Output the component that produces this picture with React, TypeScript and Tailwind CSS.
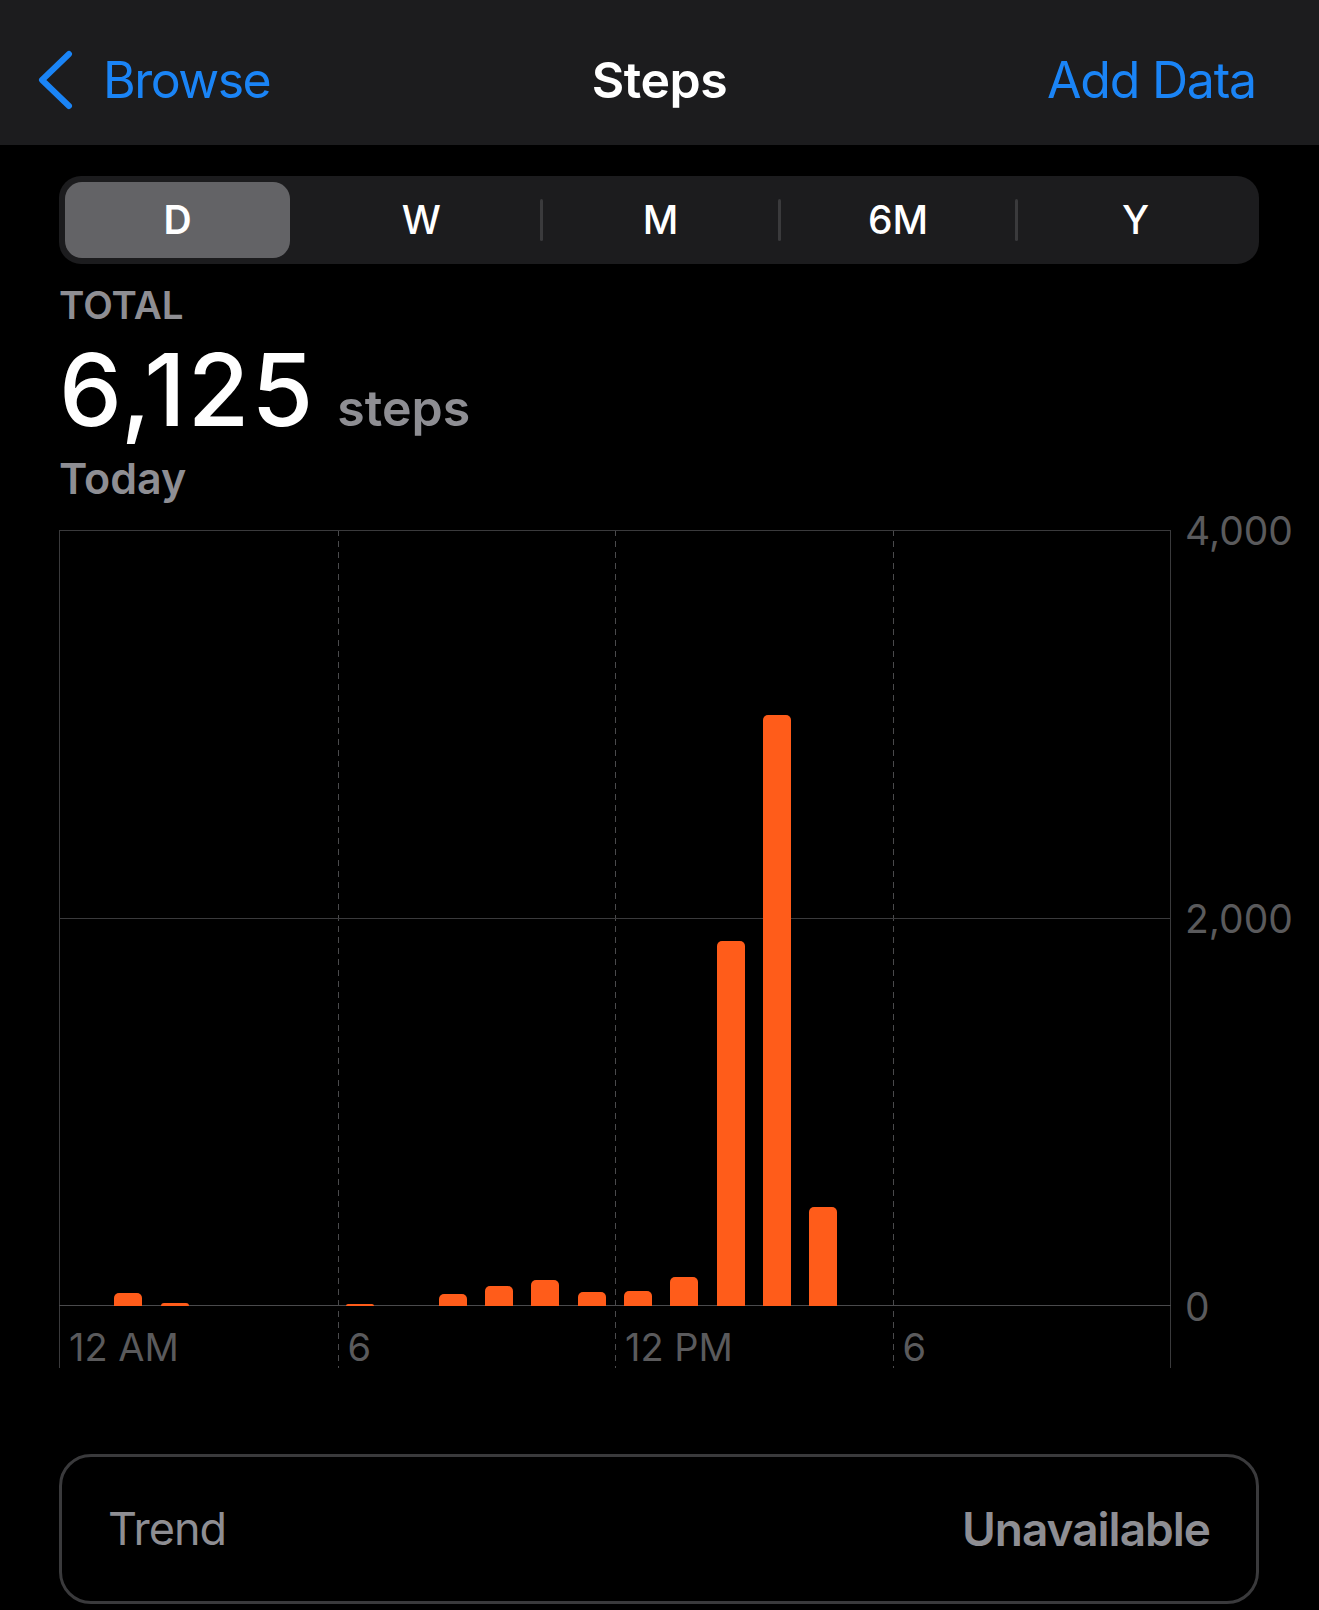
const hourly: number[] = [
  0, 65, 15, 0, 0, 0, 10, 0, 64, 103, 134, 72,
  77, 150, 1880, 3045, 510, 0, 0, 0, 0, 0, 0, 0,
];

const ranges = ["D", "W", "M", "6M", "Y"];
const xLabels = ["12 AM", "6", "12 PM", "6"];
const yLabels = ["4,000", "2,000", "0"];

const MAX = 4000;
const PLOT_H = 776;

function Chevron() {
  return (
    <svg width="40" height="60" viewBox="0 0 40 60" fill="none">
      <path
        d="M33 4 L6 30 L33 56"
        stroke="#1a84f6"
        strokeWidth="6"
        strokeLinecap="round"
        strokeLinejoin="round"
      />
    </svg>
  );
}

function Dashed() {
  return (
    <div className="w-px h-full bg-[repeating-linear-gradient(to_bottom,#4a4a4c_0px,#4a4a4c_6px,transparent_6px,transparent_11px)]"></div>
  );
}

export default function App() {
  return (
    <div className="w-[1319px] min-h-[1610px] bg-black font-['Inter',sans-serif] text-white">
      {/* Nav bar */}
      <div className="h-[145px] bg-[#1c1c1e] grid grid-cols-[1fr_auto_1fr] items-center pt-[14px]">
        <div className="flex items-center pl-[36px] text-[#1a84f6]">
          <Chevron />
          <span className="ml-[27px] text-[50px] leading-none tracking-[-1.5px]">Browse</span>
        </div>
        <div className="text-[50px] font-semibold leading-none tracking-[-0.5px]">Steps</div>
        <div className="pr-[63px] text-right text-[50px] leading-none text-[#1a84f6] tracking-[-1.2px]">
          Add Data
        </div>
      </div>

      <div className="pl-[59px] pr-[60px]">
        {/* Range picker */}
        <div className="mt-[31px] h-[88px] rounded-[22px] bg-[#1c1c1e] p-[6px] flex items-stretch">
          {ranges.map((r, i) => (
            <div key={r} className="flex-1 flex items-center">
              {i > 1 && <div className="w-[3px] h-[42px] rounded-full bg-[#3a3a3c]"></div>}
              {i === 0 ? (
                <div className="w-[225px] h-full rounded-[17px] bg-[#636366] flex items-center justify-center text-[39px] font-semibold">
                  {r}
                </div>
              ) : (
                <div className="flex-1 h-full flex items-center justify-center text-[39px] font-medium">{r}</div>
              )}
            </div>
          ))}
        </div>

        {/* Summary */}
        <div className="mt-[19px] h-[44px] leading-[44px] text-[38.5px] font-semibold text-[#8e8e93]">TOTAL</div>
        <div className="mt-[8px] flex items-baseline">
          <span className="text-[100px] leading-[110px] font-medium tracking-[2px]">6,125</span>
          <span className="ml-[22px] text-[50px] font-semibold text-[#8e8e93]">steps</span>
        </div>
        <div className="mt-[7px] h-[50px] leading-[50px] text-[43px] font-semibold text-[#8e8e93]">Today</div>

        {/* Chart */}
        <div className="mt-[27px] flex">
          <div className="w-[1112px] shrink-0 h-[838px] grid">
            {/* vertical lines + x labels */}
            <div className="col-start-1 row-start-1 grid grid-cols-4 border-x border-[#3a3a3c]">
              {xLabels.map((l, i) => (
                <div key={i} className="flex h-full">
                  {i > 0 && <Dashed />}
                  <div className="flex-1 flex flex-col">
                    <div className="h-[776px]"></div>
                    <div className="mt-[21px] pl-[9px] text-[38px] leading-[40px] text-[#5a5a5c]">{l}</div>
                  </div>
                </div>
              ))}
            </div>
            {/* horizontal lines */}
            <div className="col-start-1 row-start-1 flex flex-col">
              <div className="h-[388px] border-t border-[#3a3a3c]"></div>
              <div className="h-[388px] border-t border-b border-t-[#3a3a3c] border-b-[#4a4a4c]"></div>
            </div>
            {/* bars */}
            <div className="col-start-1 row-start-1 h-[776px] flex items-end">
              {hourly.map((v, i) => (
                <div key={i} className="flex-1 flex justify-center items-end h-full">
                  {v > 0 && (
                    <div
                      className="w-[28px] rounded-t-[5px] bg-[#ff5c1a]"
                      style={{ height: Math.max(2, (v / MAX) * PLOT_H) }}
                    ></div>
                  )}
                </div>
              ))}
            </div>
          </div>
          {/* y labels */}
          <div className="h-[776px] shrink-0 flex flex-col justify-between pl-[14px]">
            {yLabels.map((l) => (
              <div key={l} className="h-0 flex items-center">
                <span className="text-[39px] leading-none text-[#5a5a5c]">{l}</span>
              </div>
            ))}
          </div>
        </div>

        {/* Trend */}
        <div className="mt-[86px] h-[150px] rounded-[32px] border-[3px] border-[#3a3a3c] flex items-center justify-between pl-[46px] pr-[46px]">
          <span className="text-[45px] text-[#8e8e93] tracking-[-1px]">Trend</span>
          <span className="text-[46px] font-semibold text-[#8e8e93] tracking-[-1px]">Unavailable</span>
        </div>
      </div>
    </div>
  );
}
